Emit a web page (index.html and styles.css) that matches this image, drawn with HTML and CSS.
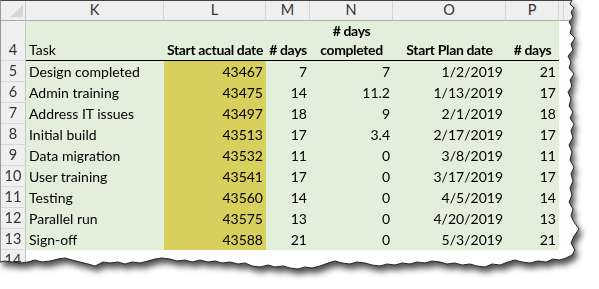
FILE: index.html
```html
<!DOCTYPE html>
<html>
<head>
<meta charset="utf-8">
<link rel="stylesheet" href="styles.css">
</head>
<body>
<div class="page">
  <div class="shadow">
    <div class="sheet">
      <div class="ch corner"><svg width="25" height="19" viewBox="0 0 25 19"><polygon points="9,16 22,16 22,4" fill="#d6d6d6"/></svg></div>
      <div class="ch">K</div>
      <div class="ch">L</div>
      <div class="ch">M</div>
      <div class="ch">N</div>
      <div class="ch">O</div>
      <div class="ch">P</div>
      <div class="ch rest"><span class="dbl"></span></div>

      <div class="rh hdr">4</div>
      <div class="c g h l">Task</div>
      <div class="c g h b ctr">Start actual date</div>
      <div class="c g h b ctr"># days</div>
      <div class="c g h b ctr two"><span># days</span><span>completed</span></div>
      <div class="c g h b ctr">Start Plan date</div>
      <div class="c g h b ctr"># days</div>
      <div class="c w"></div>

      <div class="rh">5</div><div class="c g l">Design completed</div><div class="c y r">43467</div><div class="c g r">7</div><div class="c g r">7</div><div class="c g r">1/2/2019</div><div class="c g r">21</div><div class="c w"></div>
      <div class="rh">6</div><div class="c g l">Admin training</div><div class="c y r">43475</div><div class="c g r">14</div><div class="c g r">11.2</div><div class="c g r">1/13/2019</div><div class="c g r">17</div><div class="c w"></div>
      <div class="rh">7</div><div class="c g l">Address IT issues</div><div class="c y r">43497</div><div class="c g r">18</div><div class="c g r">9</div><div class="c g r">2/1/2019</div><div class="c g r">18</div><div class="c w"></div>
      <div class="rh">8</div><div class="c g l">Initial build</div><div class="c y r">43513</div><div class="c g r">17</div><div class="c g r">3.4</div><div class="c g r">2/17/2019</div><div class="c g r">17</div><div class="c w"></div>
      <div class="rh">9</div><div class="c g l">Data migration</div><div class="c y r">43532</div><div class="c g r">11</div><div class="c g r">0</div><div class="c g r">3/8/2019</div><div class="c g r">11</div><div class="c w"></div>
      <div class="rh">10</div><div class="c g l">User training</div><div class="c y r">43541</div><div class="c g r">17</div><div class="c g r">0</div><div class="c g r">3/17/2019</div><div class="c g r">17</div><div class="c w"></div>
      <div class="rh">11</div><div class="c g l">Testing</div><div class="c y r">43560</div><div class="c g r">14</div><div class="c g r">0</div><div class="c g r">4/5/2019</div><div class="c g r">14</div><div class="c w"></div>
      <div class="rh">12</div><div class="c g l">Parallel run</div><div class="c y r">43575</div><div class="c g r">13</div><div class="c g r">0</div><div class="c g r">4/20/2019</div><div class="c g r">13</div><div class="c w"></div>
      <div class="rh">13</div><div class="c g l">Sign-off</div><div class="c y r">43588</div><div class="c g r">21</div><div class="c g r">0</div><div class="c g r">5/3/2019</div><div class="c g r">21</div><div class="c w"></div>
      <div class="rh">14</div><div class="c w"></div><div class="c w"></div><div class="c w"></div><div class="c w"></div><div class="c w"></div><div class="c w"></div><div class="c w"></div>
      <div class="rh">15</div><div class="c w"></div><div class="c w"></div><div class="c w"></div><div class="c w"></div><div class="c w"></div><div class="c w"></div><div class="c w"></div>
    </div>
  </div>
  <svg class="edge" width="599" height="289" viewBox="0 0 599 289">
    <polyline fill="none" stroke="#222" stroke-width="1" points="572,0 570,4 574,8 571,12 573,17 569,22 572,27 570,33 575,38 571,44 573,50 568,56 571,62 569,68 574,74 570,80 572,86 568,92 571,99 569,106 573,112 570,118 574,124 571,131 573,138 569,145 572,152 570,160 574,167 571,174 573,181 570,188 572,195 569,202 573,209 571,216 574,222 579,229 574,236 571,243 575,250 572,255 566,258 560,260 553,259 546,262 538,261 530,263 522,262 515,260 508,262 500,265 492,264 485,267 477,266 470,264 462,265 455,263 447,264 440,262 432,261 425,263 417,262 410,264 402,263 395,265 387,264 380,266 372,265 365,263 357,262 350,264 342,263 335,261 328,263 320,266 312,268 305,267 298,269 290,268 283,266 275,267 268,265 260,267 252,266 245,263 238,264 230,262 222,263 215,261 208,262 200,260 192,262 185,260 177,261 170,259 162,258 155,259 148,261 140,263 132,262 125,264 118,262 110,263 103,262 95,266 88,264 80,262 72,260 65,258 58,259 50,261 42,262 35,260 28,262 20,263 12,262 5,261 0,262"/>
  </svg>
</div>
</body>
</html>
```

FILE: styles.css
```css
html, body {
  margin: 0;
  padding: 0;
  background: #ffffff;
}
.page {
  position: relative;
  width: 599px;
  height: 289px;
  overflow: hidden;
  font-family: Lato, "Open Sans", sans-serif;
  font-size: 14px;
  color: #000;
}
.shadow {
  filter: drop-shadow(3px 5px 3px rgba(0,0,0,0.7));
}
.sheet {
  width: 599px;
  height: 289px;
  display: grid;
  grid-template-columns: 25px 138px 102px 44px 83px 113px 53px 1fr;
  grid-template-rows: 20px 40px repeat(11, 21px) 1fr;
  background: #fff;
  box-sizing: border-box;
  border-top: 1px solid #444;
  border-left: 1px solid #9a9a9a;
  clip-path: polygon(0 0, 572px 0, 570px 4px, 574px 8px, 571px 12px, 573px 17px, 569px 22px, 572px 27px, 570px 33px, 575px 38px, 571px 44px, 573px 50px, 568px 56px, 571px 62px, 569px 68px, 574px 74px, 570px 80px, 572px 86px, 568px 92px, 571px 99px, 569px 106px, 573px 112px, 570px 118px, 574px 124px, 571px 131px, 573px 138px, 569px 145px, 572px 152px, 570px 160px, 574px 167px, 571px 174px, 573px 181px, 570px 188px, 572px 195px, 569px 202px, 573px 209px, 571px 216px, 574px 222px, 579px 229px, 574px 236px, 571px 243px, 575px 250px, 572px 255px, 566px 258px, 560px 260px, 553px 259px, 546px 262px, 538px 261px, 530px 263px, 522px 262px, 515px 260px, 508px 262px, 500px 265px, 492px 264px, 485px 267px, 477px 266px, 470px 264px, 462px 265px, 455px 263px, 447px 264px, 440px 262px, 432px 261px, 425px 263px, 417px 262px, 410px 264px, 402px 263px, 395px 265px, 387px 264px, 380px 266px, 372px 265px, 365px 263px, 357px 262px, 350px 264px, 342px 263px, 335px 261px, 328px 263px, 320px 266px, 312px 268px, 305px 267px, 298px 269px, 290px 268px, 283px 266px, 275px 267px, 268px 265px, 260px 267px, 252px 266px, 245px 263px, 238px 264px, 230px 262px, 222px 263px, 215px 261px, 208px 262px, 200px 260px, 192px 262px, 185px 260px, 177px 261px, 170px 259px, 162px 258px, 155px 259px, 148px 261px, 140px 263px, 132px 262px, 125px 264px, 118px 262px, 110px 263px, 103px 262px, 95px 266px, 88px 264px, 80px 262px, 72px 260px, 65px 258px, 58px 259px, 50px 261px, 42px 262px, 35px 260px, 28px 262px, 20px 263px, 12px 262px, 5px 261px, 0 262px);
}
.ch {
  background: #efefef;
  border-right: 1px solid #d4d4d4;
  border-bottom: 1px solid #acacac;
  display: flex;
  align-items: center;
  justify-content: center;
  color: #333;
  font-size: 14.5px;
  line-height: 1;
}
.corner {
  position: relative;
  border-right-color: #c8c8c8;
}
.corner svg {
  position: absolute;
  left: 0;
  top: 0;
}
.rest {
  border-right: none;
  justify-content: flex-start;
}
.dbl {
  display: block;
  width: 2px;
  height: 100%;
  margin-left: 2px;
  border-right: 1px solid #d4d4d4;
}
.rh {
  background: #efefef;
  border-right: 1px solid #c8c8c8;
  border-bottom: 1px solid #d8d8d8;
  display: flex;
  align-items: center;
  justify-content: center;
  color: #333;
  font-size: 14.5px;
  line-height: 1;
  padding-top: 1px;
  box-sizing: border-box;
}
.rh.hdr {
  align-items: flex-end;
  padding-bottom: 3px;
}
.c {
  display: flex;
  align-items: center;
  padding: 1px 3px 0;
  white-space: nowrap;
  overflow: hidden;
  line-height: 1;
  box-sizing: border-box;
}
.g { background: #e2efda; }
.y { background: #d8d05c; }
.w { background: #fff; }
.l { justify-content: flex-start; }
.r { justify-content: flex-end; }
.ctr { justify-content: center; }
.h {
  align-items: flex-end;
  padding-bottom: 3px;
  border-bottom: 1px solid #000;
}
.b {
  font-weight: 700;
  letter-spacing: -0.35px;
  padding-left: 0;
  padding-right: 0;
}
.two {
  flex-direction: column;
  align-items: center;
  justify-content: flex-end;
  gap: 5px;
}
.edge {
  position: absolute;
  left: 0;
  top: 0;
  pointer-events: none;
}
```
